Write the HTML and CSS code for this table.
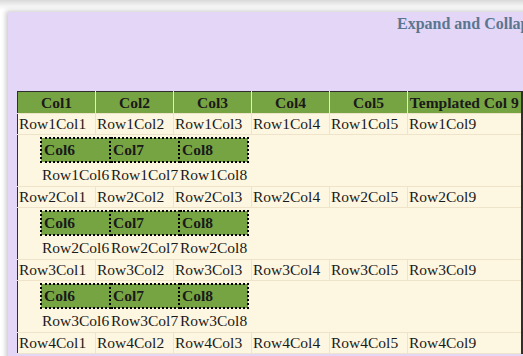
FILE: index.html
```html
<!DOCTYPE html>
<html>
<head>
<meta charset="utf-8">
<link rel="stylesheet" href="styles.css">
</head>
<body>
<div class="panel">
  <div class="title">Expand and Collapse Nested Grid</div>
  <table class="grid">
    <colgroup>
      <col class="c"><col class="c"><col class="c"><col class="c"><col class="c"><col class="c9">
    </colgroup>
    <thead>
      <tr><th>Col1</th><th>Col2</th><th>Col3</th><th>Col4</th><th>Col5</th><th>Templated Col 9</th></tr>
    </thead>
    <tbody>
      <tr class="row"><td>Row1Col1</td><td>Row1Col2</td><td>Row1Col3</td><td>Row1Col4</td><td>Row1Col5</td><td>Row1Col9</td></tr>
      <tr class="nest"><td colspan="6">
        <table class="inner">
          <tr><th>Col6</th><th>Col7</th><th>Col8</th></tr>
          <tr><td>Row1Col6</td><td>Row1Col7</td><td>Row1Col8</td></tr>
        </table>
      </td></tr>
      <tr class="row"><td>Row2Col1</td><td>Row2Col2</td><td>Row2Col3</td><td>Row2Col4</td><td>Row2Col5</td><td>Row2Col9</td></tr>
      <tr class="nest"><td colspan="6">
        <table class="inner">
          <tr><th>Col6</th><th>Col7</th><th>Col8</th></tr>
          <tr><td>Row2Col6</td><td>Row2Col7</td><td>Row2Col8</td></tr>
        </table>
      </td></tr>
      <tr class="row"><td>Row3Col1</td><td>Row3Col2</td><td>Row3Col3</td><td>Row3Col4</td><td>Row3Col5</td><td>Row3Col9</td></tr>
      <tr class="nest"><td colspan="6">
        <table class="inner">
          <tr><th>Col6</th><th>Col7</th><th>Col8</th></tr>
          <tr><td>Row3Col6</td><td>Row3Col7</td><td>Row3Col8</td></tr>
        </table>
      </td></tr>
      <tr class="row"><td>Row4Col1</td><td>Row4Col2</td><td>Row4Col3</td><td>Row4Col4</td><td>Row4Col5</td><td>Row4Col9</td></tr>
    </tbody>
  </table>
</div>
</body>
</html>
```

FILE: styles.css
```css
html, body {
  margin: 0;
  padding: 0;
  overflow: hidden;
}
body {
  width: 523px;
  height: 356px;
  background: linear-gradient(to bottom, #d9d9d9 0px, #f4f4f4 6px, #ffffff 10px);
  font-family: "Liberation Serif", "Times New Roman", serif;
  font-size: 15.5px;
  color: #1a1a1a;
}
.panel {
  margin: 12px 0 0 8px;
  width: 620px;
  height: 400px;
  background: #e4d6f7;
  box-shadow: -2px -1px 5px rgba(0, 0, 0, 0.22);
  padding-top: 2px;
  padding-left: 9px;
  box-sizing: border-box;
}
.title {
  margin-left: 380px;
  font-weight: bold;
  font-size: 16px;
  line-height: 20px;
  color: #5a7690;
  white-space: nowrap;
}
.grid {
  margin-top: 57px;
  width: 504px;
  table-layout: fixed;
  border-collapse: collapse;
  border-left: 1px solid #2e2e2e;
  border-right: 2px solid #2e2e2e;
  border-top: 1px solid #2e2e2e;
  background: #fdf6e1;
}
.grid col.c { width: 78px; }
.grid col.c9 { width: 114px; }
.grid > thead th {
  background: #77a442;
  font-weight: bold;
  text-align: center;
  height: 21px;
  padding: 0 1px;
  border-left: 1px solid #e2ead6;
  white-space: nowrap;
  overflow: hidden;
}
.grid > thead th:first-child { border-left: none; }
.row td {
  height: 20px;
  padding: 0 1px;
  border: 1px solid #efe4c9;
  white-space: nowrap;
  overflow: hidden;
}
.row td:first-child { border-left: none; }
.nest > td {
  padding: 2px 0 0 22px;
  height: 49px;
  vertical-align: top;
  border-top: 1px solid #efe4c9;
  border-bottom: 1px solid #efe4c9;
}
.inner {
  border-collapse: collapse;
  width: 209px;
  table-layout: fixed;
}
.inner th {
  background: #77a442;
  border: 2px dotted #000;
  text-align: left;
  font-weight: bold;
  height: 22px;
  padding: 0 2px;
}
.inner td {
  padding: 1px 0 0 1px;
  height: 22px;
  white-space: nowrap;
}
```
